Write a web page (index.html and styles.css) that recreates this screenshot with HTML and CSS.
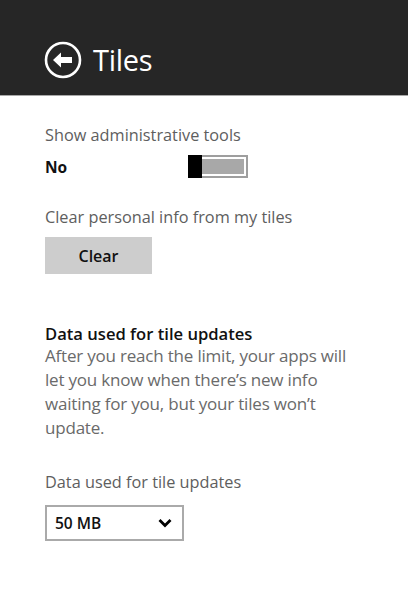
FILE: index.html
```html
<!DOCTYPE html>
<html>
<head>
<meta charset="utf-8">
<link rel="stylesheet" href="styles.css">
</head>
<body>
<header class="header">
  <svg class="back" width="38" height="38" viewBox="0 0 38 38">
    <circle cx="19" cy="19" r="17" fill="none" stroke="#fff" stroke-width="2.6"/>
    <path d="M9 19 L17 11.5 L17 16 L28 16 L28 22 L17 22 L17 26.5 Z" fill="#fff"/>
  </svg>
  <h1 class="title">Tiles</h1>
</header>
<main class="content">
  <div class="label">Show administrative tools</div>
  <div class="toggle-row">
    <span class="value">No</span>
    <div class="toggle"><div class="thumb"></div><div class="track"><div class="fill"></div></div></div>
  </div>
  <div class="label label-clear">Clear personal info from my tiles</div>
  <button class="btn">Clear</button>
  <div class="heading">Data used for tile updates</div>
  <p class="desc">After you reach the limit, your apps will let you know when there’s new info waiting for you, but your tiles won’t update.</p>
  <div class="label label-data">Data used for tile updates</div>
  <div class="select"><span>50 MB</span>
    <svg width="14" height="10" viewBox="0 0 14 10"><path d="M1.5 2 L7 7.5 L12.5 2" fill="none" stroke="#000" stroke-width="2.8"/></svg>
  </div>
</main>
</body>
</html>
```
FILE: styles.css
```css
* { box-sizing: border-box; }
body { margin: 0; background: #fff; font-family: "Open Sans", "Noto Sans", sans-serif; width: 408px; height: 615px; overflow: hidden; }
.header { height: 96px; background: #262626; border-bottom: 1px solid #a8a8a8; display: flex; align-items: center; padding: 24px 0 0 44px; gap: 11px; }
.back { display: block; }
.title { margin: 0; color: #fff; font-weight: 400; font-size: 29px; line-height: 36px; letter-spacing: -0.3px; }
.content { padding: 29px 0 0 45px; display: flex; flex-direction: column; align-items: flex-start; }
.label { color: #5e5e5e; font-size: 16.3px; line-height: 20px; }
.toggle-row { display: flex; align-items: center; margin-top: 10px; }
.value { width: 143px; font-weight: 700; font-size: 15.5px; color: #111; }
.toggle { display: flex; width: 60px; height: 23px; }
.thumb { width: 14px; background: #000; }
.track { flex: 1; border: 2px solid #9e9e9e; border-left: none; padding: 2px 2px 2px 0; background: #fff; }
.fill { height: 100%; background: #a8a8a8; }
.label-clear { margin-top: 29px; }
.btn { margin-top: 10px; width: 107px; height: 37px; background: #cdcdcd; border: none; font-family: inherit; font-weight: 600; font-size: 16px; color: #111; padding: 0; }
.heading { margin-top: 50px; font-weight: 600; font-size: 16.6px; color: #111; line-height: 20px; }
.desc { margin: 0; color: #6a6a6a; font-size: 17px; line-height: 24px; width: 320px; letter-spacing: -0.2px; }
.label-data { margin-top: 32px; }
.select { margin-top: 13px; width: 139px; height: 36px; border: 2px solid #aaa; display: flex; align-items: center; justify-content: space-between; padding: 0 10px 0 8px; font-weight: 600; font-size: 15.5px; color: #111; }
.select svg { display: block; }
```
